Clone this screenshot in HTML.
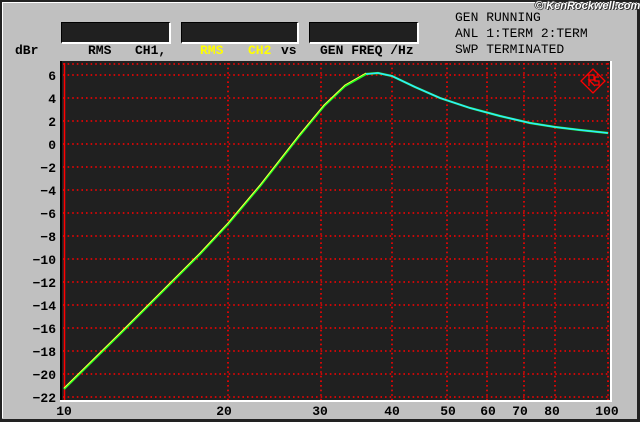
<!DOCTYPE html>
<html><head><meta charset="utf-8"><style>
html,body{margin:0;padding:0;}
body{width:640px;height:422px;overflow:hidden;background:#c0c0c0;position:relative;font-family:"Liberation Mono","DejaVu Sans Mono",monospace;font-weight:bold;font-size:13px;color:#000;}
.t{position:absolute;white-space:pre;line-height:14px;}
.box{position:absolute;background:#202020;border-right:2px solid #fff;border-bottom:2px solid #fff;border-top:1px solid #000;border-left:1px solid #000;}
</style></head><body>
<div style="position:absolute;left:0;top:0;width:640px;height:422px;box-sizing:border-box;border-left:2px solid #222;border-top:2px solid #222;border-right:3px solid #222;border-bottom:3px solid #222;"></div>
<div style="position:absolute;left:2px;top:2px;width:634px;height:416px;box-sizing:border-box;border-left:1px solid #fff;border-top:1px solid #fff;"></div>
<div class="box" style="left:61px;top:22px;width:107px;height:19px"></div>
<div class="box" style="left:181px;top:22px;width:115px;height:19px"></div>
<div class="box" style="left:309px;top:22px;width:107px;height:19px"></div>
<div class="t" style="left:15px;top:44px">dBr</div>
<div class="t" style="left:88px;top:44px">RMS</div>
<div class="t" style="left:135px;top:44px">CH1,</div>
<div class="t" style="left:200px;top:44px;color:#ffff00">RMS</div>
<div class="t" style="left:248px;top:44px;color:#ffff00">CH2</div>
<div class="t" style="left:281px;top:44px">vs</div>
<div class="t" style="left:320px;top:44px">GEN FREQ /Hz</div>
<div class="t" style="left:455px;top:11px;font-weight:normal">GEN RUNNING</div>
<div class="t" style="left:455px;top:27px;font-weight:normal">ANL 1:TERM 2:TERM</div>
<div class="t" style="left:455px;top:43px;font-weight:normal">SWP TERMINATED</div>
<div class="t" style="left:535px;top:0px;line-height:12px;color:#fff;font-family:'Liberation Sans',sans-serif;font-style:italic;font-size:11px;text-shadow:1px 1px 0 #333,-1px 0 0 #333,0 -1px 0 #333">© KenRockwell.com</div>
<svg width="640" height="422" style="position:absolute;left:0;top:0" font-family="Liberation Mono, monospace" font-weight="bold" font-size="13">
<rect x="60" y="61" width="552" height="341" fill="#000"/>
<rect x="62" y="61" width="548" height="339" fill="#202020"/>
<line x1="611" y1="61" x2="611" y2="402" stroke="#fff" stroke-width="2"/>
<line x1="60" y1="401" x2="612" y2="401" stroke="#fff" stroke-width="2"/>
<g stroke="#ff0000" stroke-width="1.6" stroke-dasharray="1.6 3">
<line x1="63" y1="64" x2="610" y2="64"/>
<line x1="63" y1="75" x2="610" y2="75"/><line x1="63" y1="98" x2="610" y2="98"/><line x1="63" y1="121" x2="610" y2="121"/><line x1="63" y1="144" x2="610" y2="144"/><line x1="63" y1="167" x2="610" y2="167"/><line x1="63" y1="190" x2="610" y2="190"/><line x1="63" y1="213" x2="610" y2="213"/><line x1="63" y1="236" x2="610" y2="236"/><line x1="63" y1="259" x2="610" y2="259"/><line x1="63" y1="282" x2="610" y2="282"/><line x1="63" y1="305" x2="610" y2="305"/><line x1="63" y1="328" x2="610" y2="328"/><line x1="63" y1="351" x2="610" y2="351"/><line x1="63" y1="374" x2="610" y2="374"/><line x1="63" y1="397" x2="610" y2="397"/>
<line x1="228" y1="63" x2="228" y2="400"/><line x1="321" y1="63" x2="321" y2="400"/><line x1="392" y1="63" x2="392" y2="400"/><line x1="447" y1="63" x2="447" y2="400"/><line x1="487" y1="63" x2="487" y2="400"/><line x1="524" y1="63" x2="524" y2="400"/><line x1="555" y1="63" x2="555" y2="400"/><line x1="608" y1="63" x2="608" y2="400"/>
</g>
<line x1="64.5" y1="63" x2="64.5" y2="400" stroke="#f00" stroke-width="1.5"/>
<g transform="translate(593,81)" stroke="#f00" fill="none" stroke-width="1.3">
<path d="M0,-12 L12,0 L0,12 L-12,0 Z"/>
<path d="M-4,-6 L-4,5 M-4,-6 L1,-6 L1,-1 L-4,-1 L2,5 M6,-4 L2,-4 L2,0 L6,0 L6,4 L2,4"/>
</g>
<polyline fill="none" stroke="#22ff22" stroke-width="2.2" points="64,389 120,334 160,294 200,254 228,224 260,186 300,135 324,106 345,86 366,74 378,73 392,76 415,87 440,98 470,108 500,116 530,123 555,127 580,130 608,133"/>
<polyline fill="none" stroke="#ffff40" stroke-width="1" points="64,388 120,333 160,293 200,253 228,223 260,185 300,134 324,105 345,85 366,73"/>
<polyline fill="none" stroke="#30e8ff" stroke-width="1.6" points="366,74 378,73 392,76 415,87 440,98 470,108 500,116 530,123 555,127 580,130 608,133"/>
<g text-anchor="end">
<text x="56" y="80">6</text><text x="56" y="103">4</text><text x="56" y="126">2</text><text x="56" y="149">0</text><text x="56" y="172">−2</text><text x="56" y="195">−4</text><text x="56" y="218">−6</text><text x="56" y="241">−8</text><text x="56" y="264">−10</text><text x="56" y="287">−12</text><text x="56" y="310">−14</text><text x="56" y="333">−16</text><text x="56" y="356">−18</text><text x="56" y="379">−20</text><text x="56" y="402">−22</text>
</g>
<g text-anchor="middle">
<text x="64" y="415">10</text><text x="224" y="415">20</text><text x="320" y="415">30</text><text x="392" y="415">40</text><text x="448" y="415">50</text><text x="488" y="415">60</text><text x="520" y="415">70</text><text x="552" y="415">80</text><text x="607" y="415">100</text>
</g>
</svg>
</body></html>
